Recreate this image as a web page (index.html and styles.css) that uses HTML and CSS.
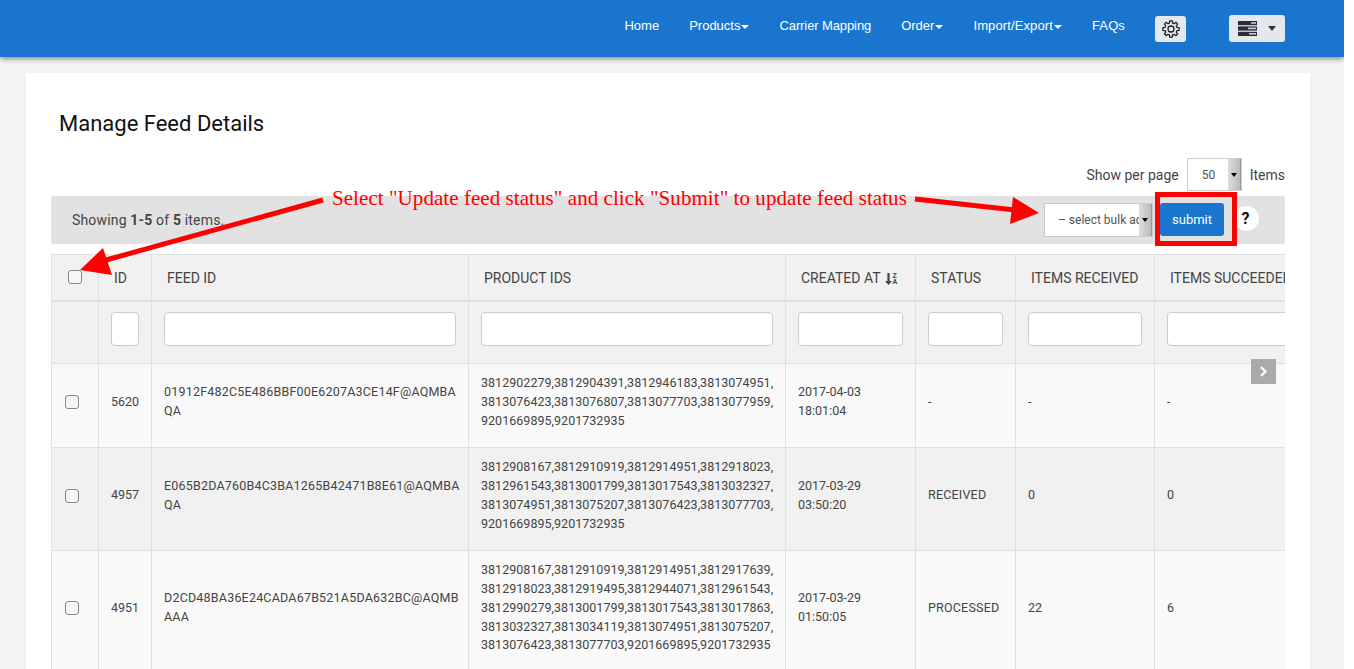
FILE: index.html
```html
<!DOCTYPE html>
<html lang="en">
<head>
  <meta charset="UTF-8">
  <title>Manage Feed Details</title>
  <link rel="stylesheet" href="styles.css">
</head>
<body>
  <div class="page">
    <nav class="topbar">
      <a class="nav-link">Home</a>
      <a class="nav-link">Products<span class="caret"></span></a>
      <a class="nav-link nav-tight">Carrier Mapping</a>
      <a class="nav-link">Order<span class="caret"></span></a>
      <a class="nav-link nav-wide">Import/Export<span class="caret"></span></a>
      <a class="nav-link nav-wide">FAQs</a>
      <button class="icon-btn gear-btn" type="button">
        <svg width="18" height="18" viewBox="0 0 24 24" fill="none" stroke="#222" stroke-width="1.7" stroke-linejoin="round">
          <circle cx="12" cy="12" r="4"/>
          <path d="M9.88 4.08L10.28 1.14H13.72L14.12 4.08L16.1 4.9L18.47 3.1L20.9 5.53L19.1 7.9L19.92 9.88L22.86 10.28V13.72L19.92 14.12L19.1 16.1L20.9 18.47L18.47 20.9L16.1 19.1L14.12 19.92L13.72 22.86H10.28L9.88 19.92L7.9 19.1L5.53 20.9L3.1 18.47L4.9 16.1L4.08 14.12L1.14 13.72V10.28L4.08 9.88L4.9 7.9L3.1 5.53L5.53 3.1L7.9 4.9z"/>
        </svg>
      </button>
      <button class="icon-btn server-btn" type="button">
        <svg width="19" height="15" viewBox="0 0 19 15">
          <rect width="19" height="4.2" fill="#2b2b3a"/>
          <rect y="5.4" width="19" height="4.2" fill="#2b2b3a"/>
          <rect y="10.8" width="19" height="4.2" fill="#2b2b3a"/>
          <rect x="13" y="1.2" width="5" height="1.6" fill="#c9ccd2"/>
          <rect x="10" y="6.6" width="8" height="1.6" fill="#c9ccd2"/>
          <rect x="11" y="12" width="7" height="1.6" fill="#c9ccd2"/>
        </svg>
        <span class="caret dark"></span>
      </button>
    </nav>

    <main class="card">
      <h1 class="title">Manage Feed Details</h1>

      <div class="per-page">
        <span>Show per page</span>
        <div class="fake-select small"><span class="val">50</span><span class="arrow"></span></div>
        <span>Items</span>
      </div>

      <div class="toolbar">
        <div class="summary">Showing <b>1-5</b> of <b>5</b> items.</div>
        <div class="bulk">
          <div class="fake-select wide"><span class="val">– select bulk action –</span><span class="arrow"></span></div>
          <button class="submit" type="button">submit</button>
          <span class="help">?</span>
        </div>
      </div>

      <div class="table-wrap">
        <table class="grid">
          <colgroup>
            <col class="c-check"><col class="c-id"><col class="c-feed"><col class="c-prod">
            <col class="c-date"><col class="c-status"><col class="c-recv"><col class="c-succ">
          </colgroup>
          <thead>
            <tr class="heads">
              <th class="check-head"><input type="checkbox"></th>
              <th>ID</th>
              <th>FEED ID</th>
              <th>PRODUCT IDS</th>
              <th><span class="sort-head">CREATED AT
                <svg width="7" height="12" viewBox="0 0 7 12"><path d="M2.400 0h2.200v8H7l-3.500 4L0 8h2.400z" fill="#444"/></svg>
                <span class="sort-az"><i>z</i><i>a</i></span>
              </span></th>
              <th>STATUS</th>
              <th>ITEMS RECEIVED</th>
              <th>ITEMS SUCCEEDED</th>
            </tr>
            <tr class="filters">
              <td></td>
              <td><input class="filter" type="text"></td>
              <td><input class="filter" type="text"></td>
              <td><input class="filter" type="text"></td>
              <td><input class="filter" type="text"></td>
              <td><input class="filter" type="text"></td>
              <td><input class="filter" type="text"></td>
              <td><input class="filter" type="text"></td>
            </tr>
          </thead>
          <tbody>
            <tr class="odd">
              <td class="check-cell"><input type="checkbox"></td>
              <td>5620</td>
              <td class="feed-id">01912F482C5E486BBF00E6207A3CE14F@AQMBA<br>QA</td>
              <td class="product-ids">3812902279,3812904391,3812946183,3813074951,<br>3813076423,3813076807,3813077703,3813077959,<br>9201669895,9201732935</td>
              <td>2017-04-03<br>18:01:04</td>
              <td>-</td>
              <td>-</td>
              <td>-</td>
            </tr>
            <tr class="even">
              <td class="check-cell"><input type="checkbox"></td>
              <td>4957</td>
              <td class="feed-id">E065B2DA760B4C3BA1265B42471B8E61@AQMBA<br>QA</td>
              <td class="product-ids">3812908167,3812910919,3812914951,3812918023,<br>3812961543,3813001799,3813017543,3813032327,<br>3813074951,3813075207,3813076423,3813077703,<br>9201669895,9201732935</td>
              <td>2017-03-29<br>03:50:20</td>
              <td class="status">RECEIVED</td>
              <td>0</td>
              <td>0</td>
            </tr>
            <tr class="odd">
              <td class="check-cell"><input type="checkbox"></td>
              <td>4951</td>
              <td class="feed-id">D2CD48BA36E24CADA67B521A5DA632BC@AQMB<br>AAA</td>
              <td class="product-ids">3812908167,3812910919,3812914951,3812917639,<br>3812918023,3812919495,3812944071,3812961543,<br>3812990279,3813001799,3813017543,3813017863,<br>3813032327,3813034119,3813074951,3813075207,<br>3813076423,3813077703,9201669895,9201732935</td>
              <td>2017-03-29<br>01:50:05</td>
              <td class="status">PROCESSED</td>
              <td>22</td>
              <td>6</td>
            </tr>
          </tbody>
        </table>
        <span class="scroll-next">
          <svg width="9" height="11" viewBox="0 0 9 11" fill="none" stroke="#fff" stroke-width="2.200"><path d="M2 1l4.500 4.500L2 10"/></svg>
        </span>
      </div>
    </main>
  </div>

  <!-- red annotation drawn on top of the screenshot -->
  <svg class="note-arrows" width="1354" height="669" viewBox="0 0 1354 669">
    <path d="M323 200L106 260" stroke="#f00" stroke-width="5"/>
    <path d="M80 270L103 248L112 275z" fill="#f00"/>
    <path d="M915 199L1015 210" stroke="#f00" stroke-width="5"/>
    <path d="M1039 213L1013 197L1010 224z" fill="#f00"/>
  </svg>
  <div class="note-text">Select "Update feed status" and click "Submit" to update feed status</div>
  <div class="note-box"></div>
</body>
</html>
```

FILE: styles.css
```css
* {
  box-sizing: border-box;
}
html, body {
  margin: 0;
  height: 669px;
  overflow: hidden;
  background: #fff;
}
body {
  font-family: Roboto, sans-serif;
  font-size: 14px;
  color: #444;
}
.page {
  width: 1344px;
  height: 669px;
  background: #f4f4f4;
  overflow: hidden;
}
.topbar {
  height: 57px;
  background: #1a75cf;
  box-shadow: 0 2px 5px rgba(0, 0, 0, 0.45);
  display: flex;
  align-items: center;
  justify-content: flex-end;
  gap: 30px;
  padding: 0 59px 6px 0;
  font-family: "Liberation Sans", Arial, sans-serif;
  font-size: 13px;
}
.nav-link {
  color: #fff;
}
.nav-tight {
  letter-spacing: -0.1px;
}
.nav-wide {
  letter-spacing: 0.12px;
}
.caret {
  display: inline-block;
  margin-left: 1px;
  vertical-align: middle;
  border-top: 4px solid #fff;
  border-left: 4.5px solid transparent;
  border-right: 4.5px solid transparent;
}
.caret.dark {
  border-top-color: #333;
  border-width: 5px 4px 0;
  margin-left: 11px;
}
.icon-btn {
  display: flex;
  align-items: center;
  justify-content: center;
  height: 26px;
  margin-top: 6px;
  padding: 0;
  border: none;
  border-radius: 3px;
  background: #e4e8ec;
}
.gear-btn {
  width: 31px;
}
.server-btn {
  width: 56px;
  height: 27px;
  margin-left: 13px;
}
.card {
  width: 1284px;
  height: 620px;
  margin: 16px 0 0 26px;
  padding: 36px 25px 0;
  background: #fff;
  box-shadow: 0 0 6px rgba(0, 0, 0, 0.03);
}
.title {
  margin: 0 0 0 8px;
  height: 49px;
  font-size: 22px;
  font-weight: 400;
  line-height: 30px;
  color: #111;
}
.per-page {
  display: flex;
  justify-content: flex-end;
  align-items: center;
  gap: 8px;
  height: 33px;
}
.fake-select {
  display: flex;
  align-items: stretch;
  background: #fff;
  border: 1px solid #ccc;
  overflow: hidden;
  font-size: 12px;
  color: #555;
}
.fake-select .val {
  flex: 1;
  white-space: nowrap;
  overflow: hidden;
  line-height: 32px;
}
.fake-select .arrow {
  flex: none;
  width: 13px;
  background: #c8c8c8 linear-gradient(to right, #ddd, #bbb);
  border-right: 1px solid #999;
  position: relative;
}
.fake-select .arrow::after {
  content: "";
  position: absolute;
  left: 3px;
  top: 14px;
  border-top: 4px solid #000;
  border-left: 3px solid transparent;
  border-right: 3px solid transparent;
}
.fake-select.small {
  width: 55px;
  height: 33px;
}
.fake-select.small .val {
  padding-left: 14px;
}
.fake-select.wide {
  width: 109px;
  height: 34px;
  margin-top: -1px;
}
.fake-select.wide .val {
  padding-left: 13px;
}
.toolbar {
  display: flex;
  justify-content: space-between;
  align-items: center;
  height: 48px;
  margin-top: 5px;
  padding: 0 26px 0 21px;
  background: #e2e2e2;
  border-radius: 3px;
}
.summary {
  letter-spacing: 0.17px;
}
.bulk {
  display: flex;
  align-items: center;
  gap: 7px;
}
.submit {
  width: 64px;
  height: 33px;
  margin-top: -2px;
  border: none;
  border-radius: 3px;
  background: #1a75cf;
  color: #fff;
  font-family: Roboto, sans-serif;
  font-size: 13px;
}
.help {
  width: 25px;
  height: 25px;
  margin: -3px 0 0 3px;
  padding-right: 2px;
  border-radius: 50%;
  background: #fff;
  color: #111;
  font-size: 16px;
  font-weight: 700;
  line-height: 25px;
  text-align: center;
}
.table-wrap {
  position: relative;
  width: 1234px;
  height: 420px;
  margin-top: 10px;
  overflow: hidden;
}
.grid {
  table-layout: fixed;
  width: 1400px;
  border-collapse: collapse;
  font-size: 12.500px;
  line-height: 18.750px;
  border-left: 1px solid #e0e0e0;
}
.c-check { width: 47px; }
.c-id { width: 53px; }
.c-feed { width: 317px; }
.c-prod { width: 317px; }
.c-date { width: 130px; }
.c-status { width: 100px; }
.c-recv { width: 139px; }
.c-succ { width: 297px; }
.grid th, .grid td {
  border: 1px solid #e0e0e0;
  padding: 0 12px;
  vertical-align: middle;
}
.heads th {
  height: 46px;
  padding: 3px 15px 0;
  background: #f1f1f1;
  border-bottom-width: 2px;
  font-size: 14px;
  font-weight: 400;
  text-align: left;
  white-space: nowrap;
  color: #444;
}
.heads .check-head {
  padding: 0 0 0 16px;
}
.filters td {
  height: 63px;
  padding-top: 10px;
  vertical-align: top;
  background: #f1f1f1;
}
.filter {
  display: block;
  width: 100%;
  height: 34px;
  border: 1px solid #ccc;
  border-radius: 4px;
  background: #fff;
}
.grid tbody td {
  padding-top: 10px;
  padding-bottom: 17px;
}
.grid input[type="checkbox"] {
  appearance: none;
  display: block;
  width: 14px;
  height: 14px;
  margin: 0;
  border: 1px solid #888;
  border-radius: 3px;
  background: #f6f6f6;
}
.grid tbody .check-cell {
  padding-left: 13px;
  padding-right: 0;
}
.odd td {
  background: #f9f9f9;
}
.even td {
  background: #f1f1f1;
}
.feed-id {
  white-space: nowrap;
  letter-spacing: 0.2px;
}
.product-ids {
  white-space: nowrap;
  letter-spacing: 0.03px;
}
.status {
  letter-spacing: 0.2px;
}
.sort-head {
  display: inline-flex;
  align-items: center;
  gap: 4px;
}
.sort-az {
  display: inline-flex;
  flex-direction: column;
  margin-left: -3px;
  font-size: 7px;
  line-height: 6px;
  font-weight: 700;
  text-transform: uppercase;
}
.sort-az i {
  font-style: normal;
}
.scroll-next {
  position: absolute;
  top: 105px;
  right: 9px;
  width: 25px;
  height: 25px;
  display: flex;
  align-items: center;
  justify-content: center;
  background: #aaa;
}
.note-arrows {
  position: absolute;
  left: 0;
  top: 0;
  pointer-events: none;
}
.note-text {
  position: absolute;
  left: 332px;
  top: 186px;
  font-family: "Liberation Serif", "Times New Roman", serif;
  font-size: 21px;
  line-height: 24px;
  letter-spacing: 0.06px;
  color: #f00;
  white-space: nowrap;
}
.note-box {
  position: absolute;
  left: 1155px;
  top: 192px;
  width: 82px;
  height: 54px;
  border: 5px solid #f00;
}
```
